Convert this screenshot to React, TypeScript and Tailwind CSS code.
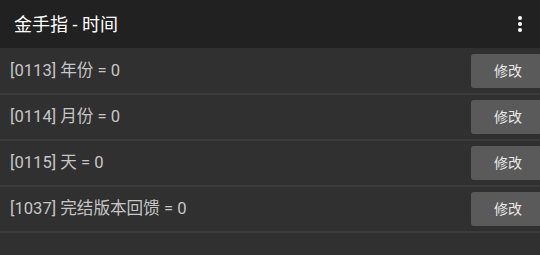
import React from "react";

interface CheatItem {
  code: string;
  name: string;
  value: number;
}

const items: CheatItem[] = [
  { code: "0113", name: "年份", value: 0 },
  { code: "0114", name: "月份", value: 0 },
  { code: "0115", name: "天", value: 0 },
  { code: "1037", name: "完结版本回馈", value: 0 },
];

const font = {
  fontFamily: '"Roboto", "Noto Sans CJK SC", sans-serif',
};

const CheatRow: React.FC<{ item: CheatItem }> = ({ item }) => {
  return (
    <div className="flex h-[46px] items-start justify-between border-b-2 border-[#3b3b3b]">
      <div className="flex h-[44px] items-center pl-[10px] text-[16.6px] text-[#c6c6c6]">
        [{item.code}] {item.name} = {item.value}
      </div>
      <button className="mt-[5px] -mr-[5px] flex h-[34px] w-[74px] items-center justify-center rounded-[3px] bg-[#5a5a5a] text-[14px] text-[#e8e8e8]">
        修改
      </button>
    </div>
  );
};

export default function App() {
  return (
    <div
      className="h-[255px] w-[540px] overflow-hidden bg-[#303030]"
      style={font}
    >
      <div className="flex h-[48px] items-center justify-between bg-[#212121] pl-[14px] pr-[14px]">
        <span className="text-[18px] text-white">金手指 - 时间</span>
        <svg width="12" height="20" viewBox="0 0 12 20" fill="#ffffff">
          <circle cx="6" cy="4" r="2" />
          <circle cx="6" cy="10" r="2" />
          <circle cx="6" cy="16" r="2" />
        </svg>
      </div>
      <div className="flex flex-col pt-[1px]">
        {items.map((item) => (
          <CheatRow key={item.code} item={item} />
        ))}
      </div>
    </div>
  );
}
